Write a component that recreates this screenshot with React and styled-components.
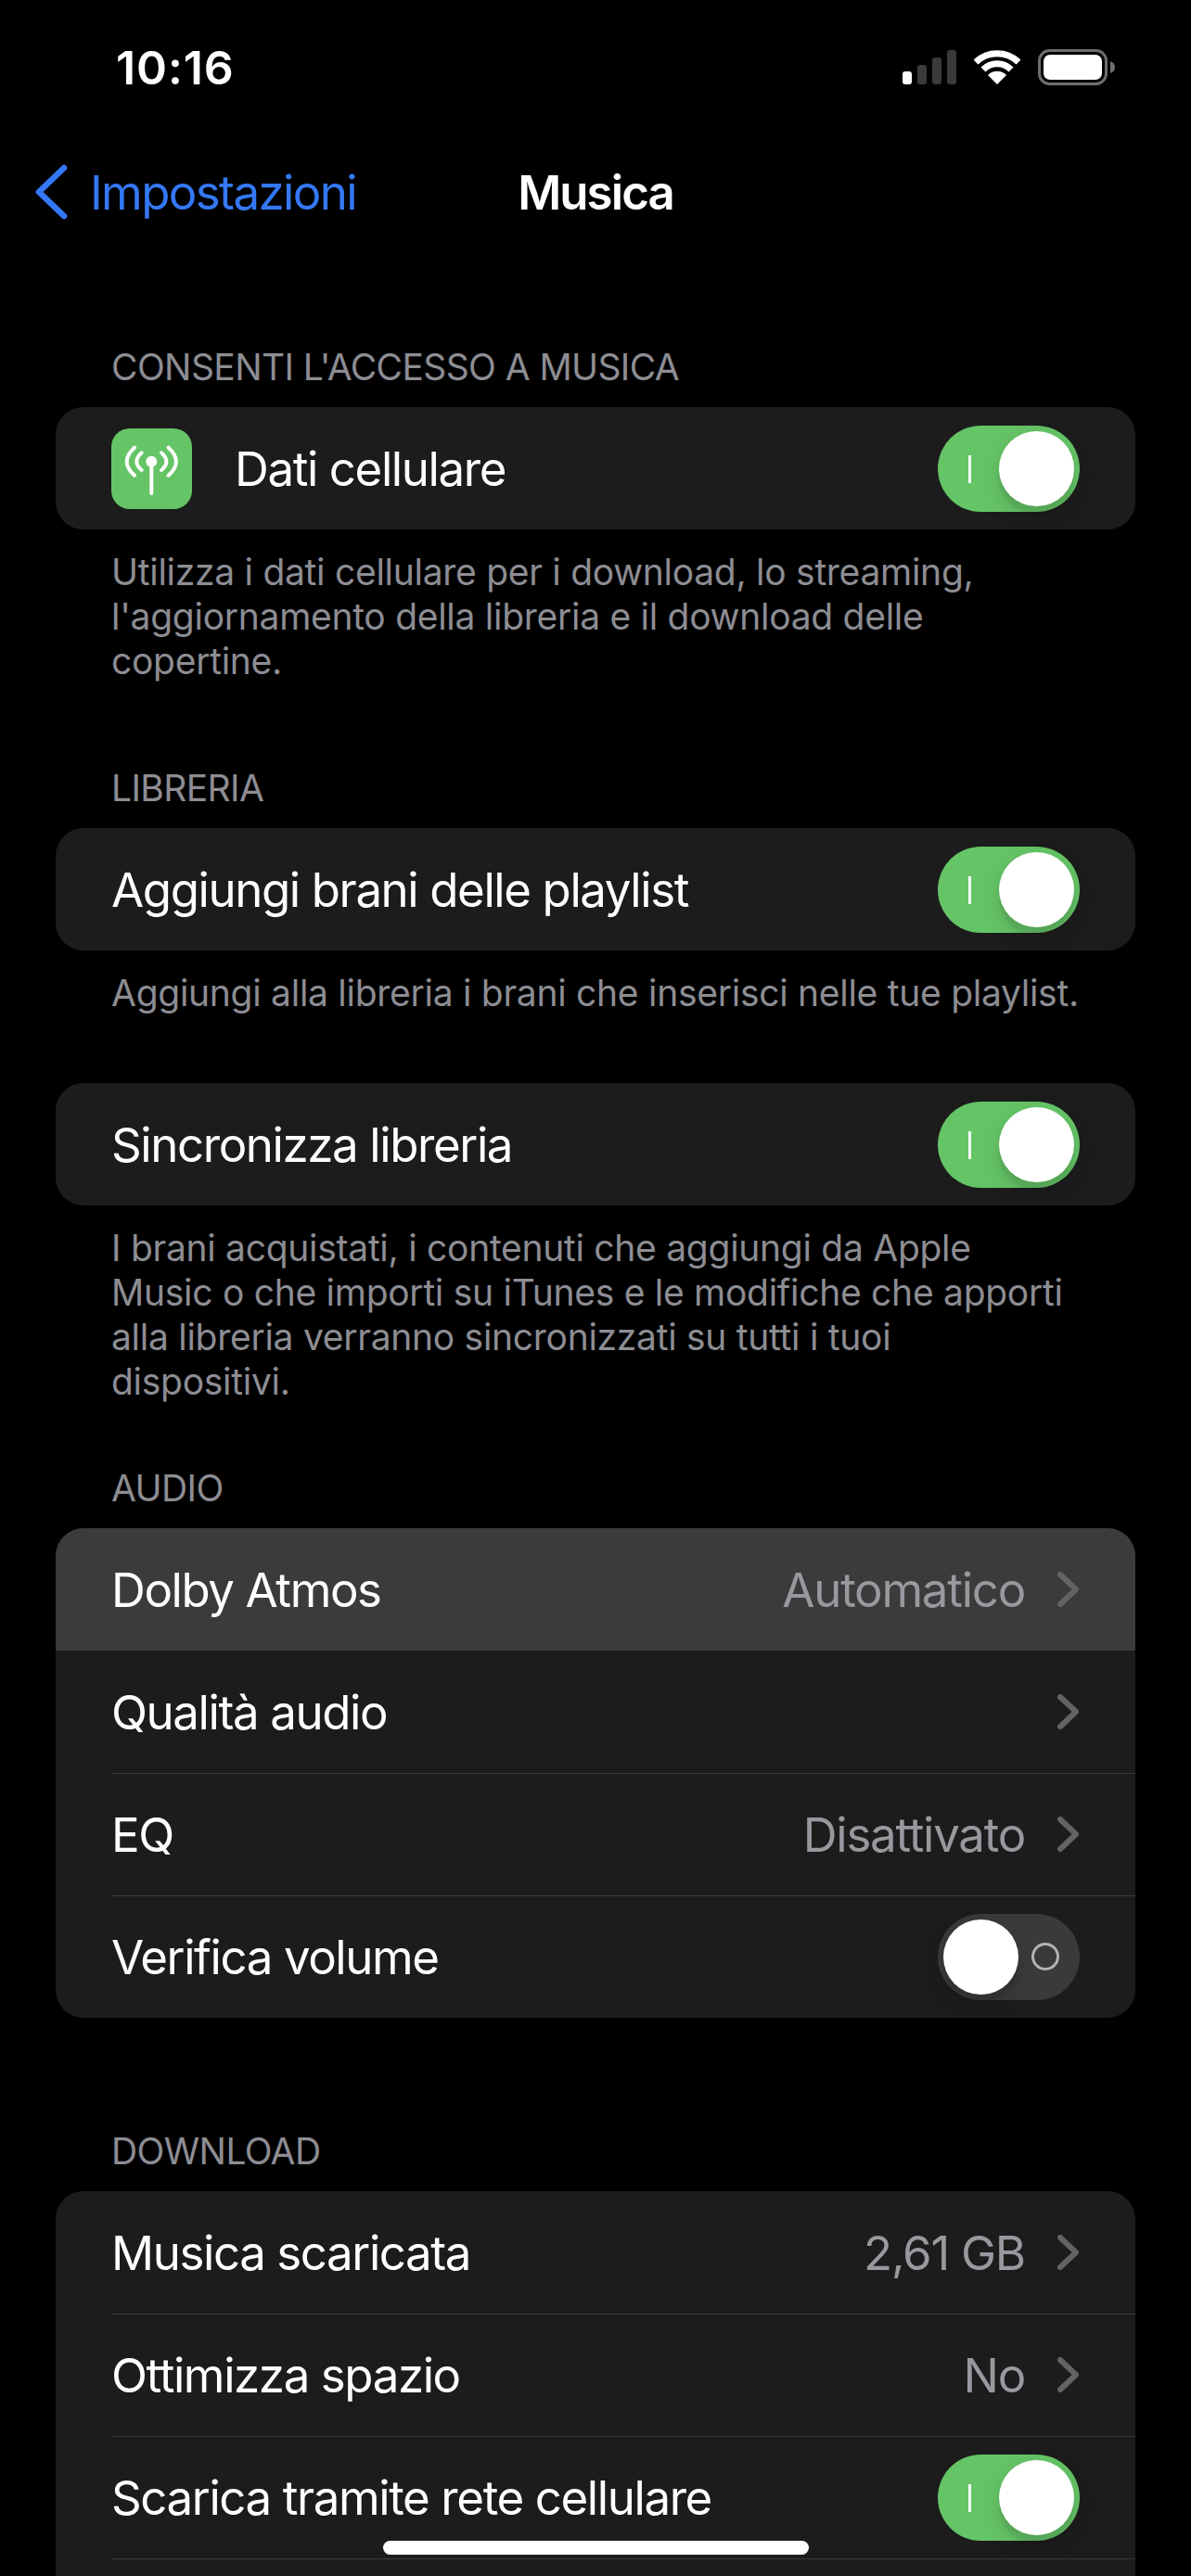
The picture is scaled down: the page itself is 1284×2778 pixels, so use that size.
import React from "react";
import styled, { createGlobalStyle } from "styled-components";

const GlobalStyle = createGlobalStyle`
  html, body {
    margin: 0;
    background: #000;
  }
  body {
    font-family: Inter, "Noto Sans", "Liberation Sans", sans-serif;
    -webkit-font-smoothing: antialiased;
  }
`;

const Page = styled.div`
  position: relative;
  width: 1284px;
  height: 2778px;
  overflow: hidden;
  background: #000;
  color: #fff;
`;

const StatusBar = styled.div`
  height: 141px;
  box-sizing: border-box;
  padding: 53px 82px 0 125px;
  display: flex;
  justify-content: space-between;
  align-items: flex-start;
`;

const Clock = styled.div`
  font-size: 50px;
  line-height: 40px;
  font-weight: 600;
  letter-spacing: 0.9px;
`;

const StatusIcons = styled.div`
  display: flex;
  align-items: center;
  gap: 19px;
`;

const NavBar = styled.div`
  height: 132px;
  display: grid;
  grid-template-columns: 1fr auto 1fr;
  align-items: center;
  font-size: 51px;
`;

const BackLink = styled.div`
  display: flex;
  align-items: center;
  gap: 23px;
  padding-left: 37px;
  color: #3478f6;
  letter-spacing: -1.6px;
`;

const NavTitle = styled.div`
  font-weight: 600;
  letter-spacing: -1.9px;
`;

const Section = styled.section`
  margin: ${(p) => p.$top}px 60px 0;
`;

const SectionHeader = styled.div`
  padding: 0 60px 19px;
  font-size: 39px;
  line-height: 48px;
  color: #8d8d93;
  letter-spacing: -0.6px;
`;

const SectionFooter = styled.div`
  padding: 22px 60px 0;
  font-size: 39px;
  line-height: 48px;
  color: #8d8d93;
  letter-spacing: -0.28px;
`;

const Card = styled.div`
  background: #1c1c1c;
  border-radius: 30px;
  overflow: hidden;
`;

const Row = styled.div`
  position: relative;
  height: 132px;
  display: flex;
  align-items: center;
  padding: 0 60px;
  background: ${(p) => (p.$active ? "#3b3b3b" : "transparent")};
  font-size: 51px;
  letter-spacing: -1.4px;

  &::before {
    content: "";
    display: ${(p) => (p.$line ? "block" : "none")};
    position: absolute;
    top: 0;
    left: 60px;
    right: 0;
    height: 1px;
    background: #3a3a3c;
  }
`;

const RowIcon = styled.div`
  width: 87px;
  height: 87px;
  margin-right: 46px;
  border-radius: 20px;
  background: #65c466;
  display: flex;
`;

const RowLabel = styled.div`
  flex: 1;
`;

const RowValue = styled.div`
  color: #98989e;
  margin-right: 35px;
  letter-spacing: -1.25px;
`;

const Track = styled.div`
  position: relative;
  width: 153px;
  height: 93px;
  border-radius: 47px;
  background: ${(p) => (p.$on ? "#65c466" : "#3a3a3c")};
`;

const Knob = styled.div`
  position: absolute;
  top: 6px;
  left: ${(p) => (p.$on ? 66 : 6)}px;
  width: 81px;
  height: 81px;
  border-radius: 50%;
  background: #fff;
  box-shadow: 0 9px 24px rgba(0, 0, 0, 0.15), 0 9px 3px rgba(0, 0, 0, 0.06);
`;

const OnMark = styled.div`
  position: absolute;
  left: 33px;
  top: 32px;
  width: 3px;
  height: 30px;
  background: #fff;
`;

const OffMark = styled.div`
  position: absolute;
  left: 101px;
  top: 31px;
  width: 30px;
  height: 30px;
  box-sizing: border-box;
  border: 3px solid #b4b4b6;
  border-radius: 50%;
`;

const HomeIndicator = styled.div`
  position: absolute;
  left: 413px;
  bottom: 23px;
  width: 459px;
  height: 15px;
  border-radius: 8px;
  background: #fff;
`;

const Toggle = ({ on }) => (
  <Track $on={on}>
    {on ? <OnMark /> : <OffMark />}
    <Knob $on={on} />
  </Track>
);

const Chevron = () => (
  <svg width="24" height="38" viewBox="0 0 24 38" fill="none">
    <path d="M3 3 L20 19 L3 35" stroke="#636366" strokeWidth="6" strokeLinecap="round" strokeLinejoin="round" />
  </svg>
);

const BackChevron = () => (
  <svg width="37" height="60" viewBox="0 0 37 60" fill="none">
    <path d="M32 4 L5 30 L32 56" stroke="#3478f6" strokeWidth="6.5" strokeLinecap="round" strokeLinejoin="round" />
  </svg>
);

const SignalIcon = () => (
  <svg width="58" height="37" viewBox="0 0 58 37">
    <rect x="0" y="23" width="10" height="14" rx="3" fill="#fff" />
    <rect x="16" y="16" width="10" height="21" rx="3" fill="#3a3a3c" />
    <rect x="32" y="8" width="10" height="29" rx="3" fill="#3a3a3c" />
    <rect x="48" y="0" width="10" height="37" rx="3" fill="#3a3a3c" />
  </svg>
);

const WifiIcon = () => (
  <svg width="50" height="37" viewBox="0 0 50 37" fill="none">
    <path d="M2 13 A33 33 0 0 1 48 13" stroke="#fff" strokeWidth="7" />
    <path d="M10 21 A21 21 0 0 1 40 21" stroke="#fff" strokeWidth="7" />
    <path d="M25 37 L15 27 A14 14 0 0 1 35 27 Z" fill="#fff" />
  </svg>
);

const BatteryIcon = () => (
  <svg width="83" height="39" viewBox="0 0 83 39">
    <rect x="1.5" y="1.5" width="72" height="36" rx="11" fill="none" stroke="#6e6e70" strokeWidth="3" />
    <rect x="6" y="6" width="63" height="27" rx="7" fill="#fff" />
    <path d="M78 13 C81 14 83 16 83 19.5 C83 23 81 25 78 26 Z" fill="#6e6e70" />
  </svg>
);

const AntennaIcon = () => (
  <svg width="87" height="87" viewBox="0 0 87 87" fill="none" stroke="#fff" strokeLinecap="round">
    <path d="M25 20.7 Q8.4 35.7 25 50.7" strokeWidth="4" />
    <path d="M32.7 26.3 Q22 35.7 32.7 45" strokeWidth="4" />
    <path d="M61.6 20.7 Q78.2 35.7 61.6 50.7" strokeWidth="4" />
    <path d="M54 26.3 Q64.7 35.7 54 45" strokeWidth="4" />
    <path d="M43.3 36 V70" strokeWidth="4" />
    <circle cx="43.3" cy="35.7" r="6" fill="#fff" stroke="none" />
  </svg>
);

export default function App() {
  return (
    <Page>
      <GlobalStyle />
      <StatusBar>
        <Clock>10:16</Clock>
        <StatusIcons>
          <SignalIcon />
          <WifiIcon />
          <BatteryIcon />
        </StatusIcons>
      </StatusBar>
      <NavBar>
        <BackLink>
          <BackChevron />
          Impostazioni
        </BackLink>
        <NavTitle>Musica</NavTitle>
      </NavBar>

      <Section $top={99}>
        <SectionHeader>CONSENTI L'ACCESSO A MUSICA</SectionHeader>
        <Card>
          <Row>
            <RowIcon>
              <AntennaIcon />
            </RowIcon>
            <RowLabel>Dati cellulare</RowLabel>
            <Toggle on />
          </Row>
        </Card>
        <SectionFooter>
          Utilizza i dati cellulare per i download, lo streaming,
          <br />
          l'aggiornamento della libreria e il download delle
          <br />
          copertine.
        </SectionFooter>
      </Section>

      <Section $top={89}>
        <SectionHeader>LIBRERIA</SectionHeader>
        <Card>
          <Row>
            <RowLabel>Aggiungi brani delle playlist</RowLabel>
            <Toggle on />
          </Row>
        </Card>
        <SectionFooter>Aggiungi alla libreria i brani che inserisci nelle tue playlist.</SectionFooter>
      </Section>

      <Section $top={73}>
        <Card>
          <Row>
            <RowLabel>Sincronizza libreria</RowLabel>
            <Toggle on />
          </Row>
        </Card>
        <SectionFooter>
          I brani acquistati, i contenuti che aggiungi da Apple
          <br />
          Music o che importi su iTunes e le modifiche che apporti
          <br />
          alla libreria verranno sincronizzati su tutti i tuoi
          <br />
          dispositivi.
        </SectionFooter>
      </Section>

      <Section $top={67}>
        <SectionHeader>AUDIO</SectionHeader>
        <Card>
          <Row $active>
            <RowLabel>Dolby Atmos</RowLabel>
            <RowValue>Automatico</RowValue>
            <Chevron />
          </Row>
          <Row>
            <RowLabel>Qualità audio</RowLabel>
            <Chevron />
          </Row>
          <Row $line>
            <RowLabel>EQ</RowLabel>
            <RowValue>Disattivato</RowValue>
            <Chevron />
          </Row>
          <Row $line>
            <RowLabel>Verifica volume</RowLabel>
            <Toggle />
          </Row>
        </Card>
      </Section>

      <Section $top={120}>
        <SectionHeader>DOWNLOAD</SectionHeader>
        <Card>
          <Row>
            <RowLabel>Musica scaricata</RowLabel>
            <RowValue>2,61 GB</RowValue>
            <Chevron />
          </Row>
          <Row $line>
            <RowLabel>Ottimizza spazio</RowLabel>
            <RowValue>No</RowValue>
            <Chevron />
          </Row>
          <Row $line>
            <RowLabel>Scarica tramite rete cellulare</RowLabel>
            <Toggle on />
          </Row>
          <Row $line />
        </Card>
      </Section>

      <HomeIndicator />
    </Page>
  );
}
